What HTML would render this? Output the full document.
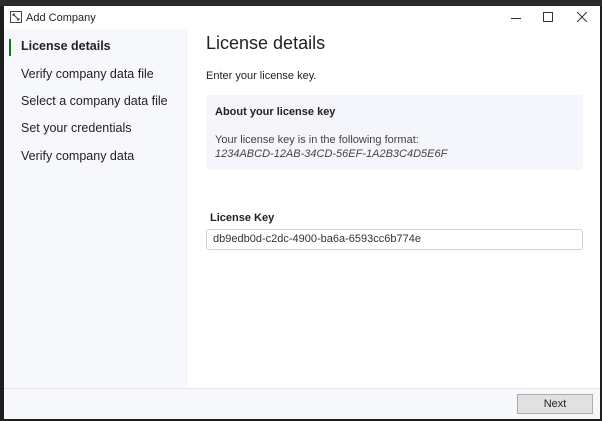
<!DOCTYPE html>
<html><head><style>
body{margin:0;width:602px;height:421px;background:#1e1e1e;position:relative;overflow:hidden;font-family:"Liberation Sans",sans-serif;}
.win{position:absolute;left:4px;top:6px;width:596px;height:412px;background:#fff;}
.title{position:absolute;left:0;top:0;width:596px;height:23px;font-size:11px;color:#222;}
.side{position:absolute;left:0;top:23px;width:184px;height:359px;background:#f7f8fc;}
.nav{position:absolute;left:17px;font-size:12.5px;color:#222;}
.foot{position:absolute;left:0;top:382px;width:596px;height:30px;background:#f7f8fc;border-top:1px solid #e4e4e8;}
.t{position:absolute;color:#222;}
</style></head><body>
<div style="position:absolute;left:0;top:0;width:602px;height:6px;background:#2a2a2a"></div>
<div class="win">
 <div class="title">
  <svg style="position:absolute;left:6px;top:5px" width="12" height="12"><rect x="0.5" y="0.5" width="11" height="11" fill="none" stroke="#444"/><path d="M3 3l3 3M3 3v2M3 3h2M9 9L6 6M9 9V7M9 9H7" stroke="#444" fill="none"/></svg>
  <span style="position:absolute;left:22px;top:6px">Add Company</span>
  <div style="position:absolute;left:507px;top:12px;width:10px;height:1px;background:#333"></div>
  <div style="position:absolute;left:539px;top:6px;width:8px;height:8px;border:1px solid #333"></div>
  <svg style="position:absolute;left:573px;top:6px" width="10" height="10"><path d="M0 0L10 10M10 0L0 10" stroke="#333"/></svg>
 </div>
 <div class="side">
  <div style="position:absolute;left:5px;top:10px;width:2px;height:17px;background:#107c10"></div>
  <div class="nav" style="top:10px;font-weight:bold">License details</div>
  <div class="nav" style="top:38px">Verify company data file</div>
  <div class="nav" style="top:65px">Select a company data file</div>
  <div class="nav" style="top:92px">Set your credentials</div>
  <div class="nav" style="top:120px">Verify company data</div>
 </div>
 <div class="t" style="left:202px;top:27px;font-size:18px">License details</div>
 <div class="t" style="left:202px;top:64px;font-size:11px">Enter your license key.</div>
 <div style="position:absolute;left:202px;top:89px;width:377px;height:75px;background:#f5f6fb;border-radius:3px"></div>
 <div class="t" style="left:211px;top:100px;font-size:11px;font-weight:bold">About your license key</div>
 <div class="t" style="left:211px;top:128px;font-size:11px;color:#444">Your license key is in the following format:</div>
 <div class="t" style="left:211px;top:142px;font-size:11px;color:#444;font-style:italic">1234ABCD-12AB-34CD-56EF-1A2B3C4D5E6F</div>
 <div class="t" style="left:206px;top:206px;font-size:11px;font-weight:bold">License Key</div>
 <div style="position:absolute;left:202px;top:223px;width:375px;height:19px;border:1px solid #d4d4d4;border-radius:3px"></div>
 <div class="t" style="left:209px;top:227px;font-size:11px;color:#333">db9edb0d-c2dc-4900-ba6a-6593cc6b774e</div>
 <div class="foot">
  <div style="position:absolute;left:513px;top:5px;width:74px;height:18px;background:#e1e1e1;border:1px solid #adadad;font-size:11px;text-align:center;line-height:19px;color:#222">Next</div>
 </div>
</div>
</body></html>
